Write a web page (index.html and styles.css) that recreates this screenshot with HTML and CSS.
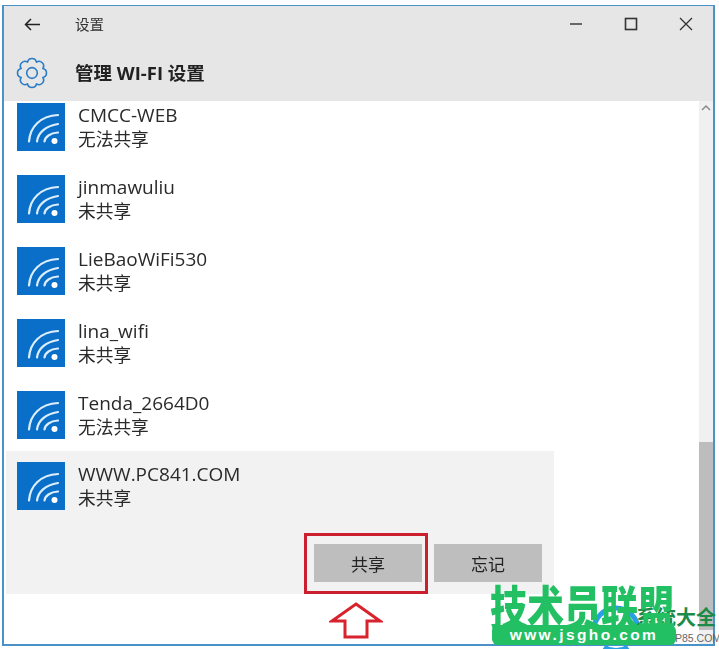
FILE: index.html
```html
<!DOCTYPE html>
<html lang="zh">
<head>
<meta charset="utf-8">
<title>设置</title>
<link rel="stylesheet" href="styles.css">
</head>
<body>
<svg class="defs" width="0" height="0">
  <symbol id="wifi" viewBox="0 0 48 48">
    <rect width="48" height="48" fill="#0a6fc9"/>
    <g fill="none" stroke="#dceefa" stroke-width="2.200" stroke-linecap="round"><path d="M12 38.500C13 24 23 13 41 12"/><path d="M20 38.500C21 30 28 23 41 21"/><path d="M27.500 38.500C28 34 33 30 41 29.500"/></g>
    <circle cx="37.500" cy="38" r="3" fill="#fff"/>
  </symbol>
</svg>
<div class="window">
  <header class="head">
    <div class="titlebar">
      <svg class="back" width="16" height="13" viewBox="0 0 16 13"><path d="M7 1 1.500 6.500 7 12M1.500 6.500H16" fill="none" stroke="#222" stroke-width="1.500"/></svg>
      <span class="title">设置</span>
      <div class="controls">
        <svg width="14" height="14" viewBox="0 0 14 14"><path d="M1 7h12" stroke="#333" stroke-width="1.400"/></svg>
        <svg width="14" height="14" viewBox="0 0 14 14"><rect x="1.500" y="1.500" width="11" height="11" fill="none" stroke="#333" stroke-width="1.600"/></svg>
        <svg width="14" height="14" viewBox="0 0 14 14"><path d="m1 1 12 12M13 1 1 13" stroke="#333" stroke-width="1.300"/></svg>
      </div>
    </div>
    <div class="pagebar">
      <svg class="gear" width="32" height="32" viewBox="0 0 30 30"><path d="M25.160 19.210A4.300 4.300 0 0 1 19.210 25.160A4.300 4.300 0 0 1 10.790 25.160A4.300 4.300 0 0 1 4.840 19.210A4.300 4.300 0 0 1 4.840 10.790A4.300 4.300 0 0 1 10.790 4.840A4.300 4.300 0 0 1 19.210 4.840A4.300 4.300 0 0 1 25.160 10.790A4.300 4.300 0 0 1 25.160 19.210Z" fill="none" stroke="#2a7cc7" stroke-width="1.500" stroke-linejoin="round"/><circle cx="15" cy="15" r="5" fill="none" stroke="#2a7cc7" stroke-width="1.500"/></svg>
      <h1 class="pagetitle">管理 WI-FI 设置</h1>
    </div>
  </header>
  <div class="body">
    <div class="list">
      <div class="row first">
        <svg class="wifi"><use href="#wifi"/></svg>
        <div class="text"><div class="name">CMCC-WEB</div><div class="state">无法共享</div></div>
      </div>
      <div class="row">
        <svg class="wifi"><use href="#wifi"/></svg>
        <div class="text"><div class="name">jinmawuliu</div><div class="state">未共享</div></div>
      </div>
      <div class="row">
        <svg class="wifi"><use href="#wifi"/></svg>
        <div class="text"><div class="name">LieBaoWiFi530</div><div class="state">未共享</div></div>
      </div>
      <div class="row">
        <svg class="wifi"><use href="#wifi"/></svg>
        <div class="text"><div class="name">lina_wifi</div><div class="state">未共享</div></div>
      </div>
      <div class="row">
        <svg class="wifi"><use href="#wifi"/></svg>
        <div class="text"><div class="name">Tenda_2664D0</div><div class="state">无法共享</div></div>
      </div>
      <div class="row selected">
        <div class="rowmain">
          <svg class="wifi"><use href="#wifi"/></svg>
          <div class="text"><div class="name">WWW.PC841.COM</div><div class="state">未共享</div></div>
        </div>
        <div class="actions">
          <button class="btn">共享</button>
          <button class="btn">忘记</button>
        </div>
      </div>
    </div>
    <div class="scrollbar">
      <svg class="up" width="12" height="8" viewBox="0 0 12 8"><path d="M2 6l4-4 4 4" fill="none" stroke="#8a8a8a" stroke-width="1.500"/></svg>
      <div class="thumb"></div>
    </div>
  </div>
</div>
<div class="redbox"></div>
<svg class="arrow" width="54" height="37" viewBox="0 0 54 37"><path d="M27 2 51 19H38V35H16V19H3z" fill="#fff" stroke="#d8232e" stroke-width="3"/></svg>
<div class="mark">
  <svg class="markring" width="54" height="48" viewBox="0 0 54 48"><g fill="none" stroke="#2b9fe6" stroke-width="5"><path d="M5 27a22 22 0 0 1 44 0"/><path d="M15 44a22 22 0 0 0 24 0"/></g></svg>
  <span class="marksys">系统大全</span>
  <span class="marksite">P85.COM</span>
  <span class="markname">技术员联盟</span>
  <span class="markpill">www.jsgho.com</span>
</div>
</body>
</html>
```

FILE: styles.css
```css
html, body {
  margin: 0;
  padding: 0;
  background: #fff;
  width: 719px;
  height: 649px;
  overflow: hidden;
}
body {
  position: relative;
  font-family: "Open Sans", "Noto Sans CJK SC", sans-serif;
  color: #222;
}
.defs { position: absolute; }
.window {
  box-sizing: border-box;
  width: 713px;
  height: 641px;
  margin: 5px 0 0 2px;
  border: 2px solid #4a93c8;
  border-top-width: 1px;
  display: flex;
  flex-direction: column;
  background: #fff;
  filter: blur(.5px);
}
.head {
  height: 95px;
  flex: none;
  background: #e6e6e6;
}
.titlebar {
  height: 36px;
  display: flex;
  align-items: center;
  padding: 0 20px;
}
.back { flex: none; }
.title {
  margin-left: 35px;
  margin-bottom: 2px;
  font-size: 14.500px;
  color: #333;
}
.controls {
  margin-left: auto;
  display: flex;
  gap: 41px;
}
.pagebar {
  display: flex;
  align-items: center;
  height: 40px;
  padding-left: 12px;
  margin-top: 11px;
}
.gear { flex: none; }
.pagetitle {
  margin: 0 0 2px 27px;
  font-size: 18.500px;
  font-weight: 700;
  color: #222;
}
.body {
  flex: 1;
  min-height: 0;
  display: flex;
}
.list {
  flex: 1;
  min-width: 0;
  overflow: hidden;
  padding-left: 2px;
}
.row {
  box-sizing: border-box;
  height: 71.900px;
  padding: 11px 0 0 11px;
  display: flex;
  gap: 13px;
}
.row.first { margin-top: -9px; }
.wifi {
  width: 48px;
  height: 48px;
  flex: none;
}
.name {
  font-size: 19px;
  line-height: 24px;
  color: #2a2a2a;
}
.state {
  font-size: 17.700px;
  line-height: 24px;
  color: #2a2a2a;
}
.row.selected {
  display: block;
  width: 548px;
  height: 143px;
  background: #f2f2f2;
}
.rowmain {
  display: flex;
  gap: 13px;
}
.actions {
  display: flex;
  gap: 12px;
  justify-content: flex-end;
  margin-top: 34px;
  padding-right: 12px;
}
.btn {
  width: 108px;
  height: 38px;
  border: 0;
  padding: 0;
  background: #bebebe;
  font: 17px "Noto Sans CJK SC", sans-serif;
  color: #222;
}
.scrollbar {
  width: 14px;
  flex: none;
  background: #f0f0f0;
  display: flex;
  flex-direction: column;
  align-items: center;
}
.up { margin-top: 3px; flex: none; }
.thumb {
  margin-top: 330px;
  width: 100%;
  height: 188px;
  flex: none;
  background: #bdbdbd;
}
.redbox {
  position: absolute;
  left: 304px;
  top: 533px;
  width: 118px;
  height: 55px;
  border: 3px solid #cc1f2d;
}
.arrow {
  position: absolute;
  left: 329px;
  top: 602px;
}
.mark {
  position: absolute;
  left: 0;
  top: 0;
  width: 719px;
  height: 649px;
  pointer-events: none;
  overflow: hidden;
}
.markring { position: absolute; left: 589px; top: 603px; }
.marksys {
  position: absolute;
  left: 636px;
  top: 603px;
  font: 700 20px/28px "Noto Sans CJK SC", sans-serif;
  color: #1c8a48;
  white-space: nowrap;
}
.marksite {
  position: absolute;
  left: 675px;
  top: 631px;
  font: 10.500px/14px "Liberation Sans", sans-serif;
  color: #666;
  white-space: nowrap;
}
.markname {
  position: absolute;
  left: 490px;
  top: 580px;
  font: 900 37px/50px "Noto Sans CJK SC", sans-serif;
  color: #22c063;
  white-space: nowrap;
  transform: scaleY(1.250);
  transform-origin: 0 50%;
}
.markpill {
  position: absolute;
  left: 492px;
  top: 625px;
  box-sizing: border-box;
  width: 184px;
  height: 20px;
  border-radius: 6px;
  background: #22c063;
  color: #fff;
  text-align: center;
  font: 700 15.500px/20px "Liberation Sans", sans-serif;
  letter-spacing: 2.400px;
  white-space: nowrap;
}
```
